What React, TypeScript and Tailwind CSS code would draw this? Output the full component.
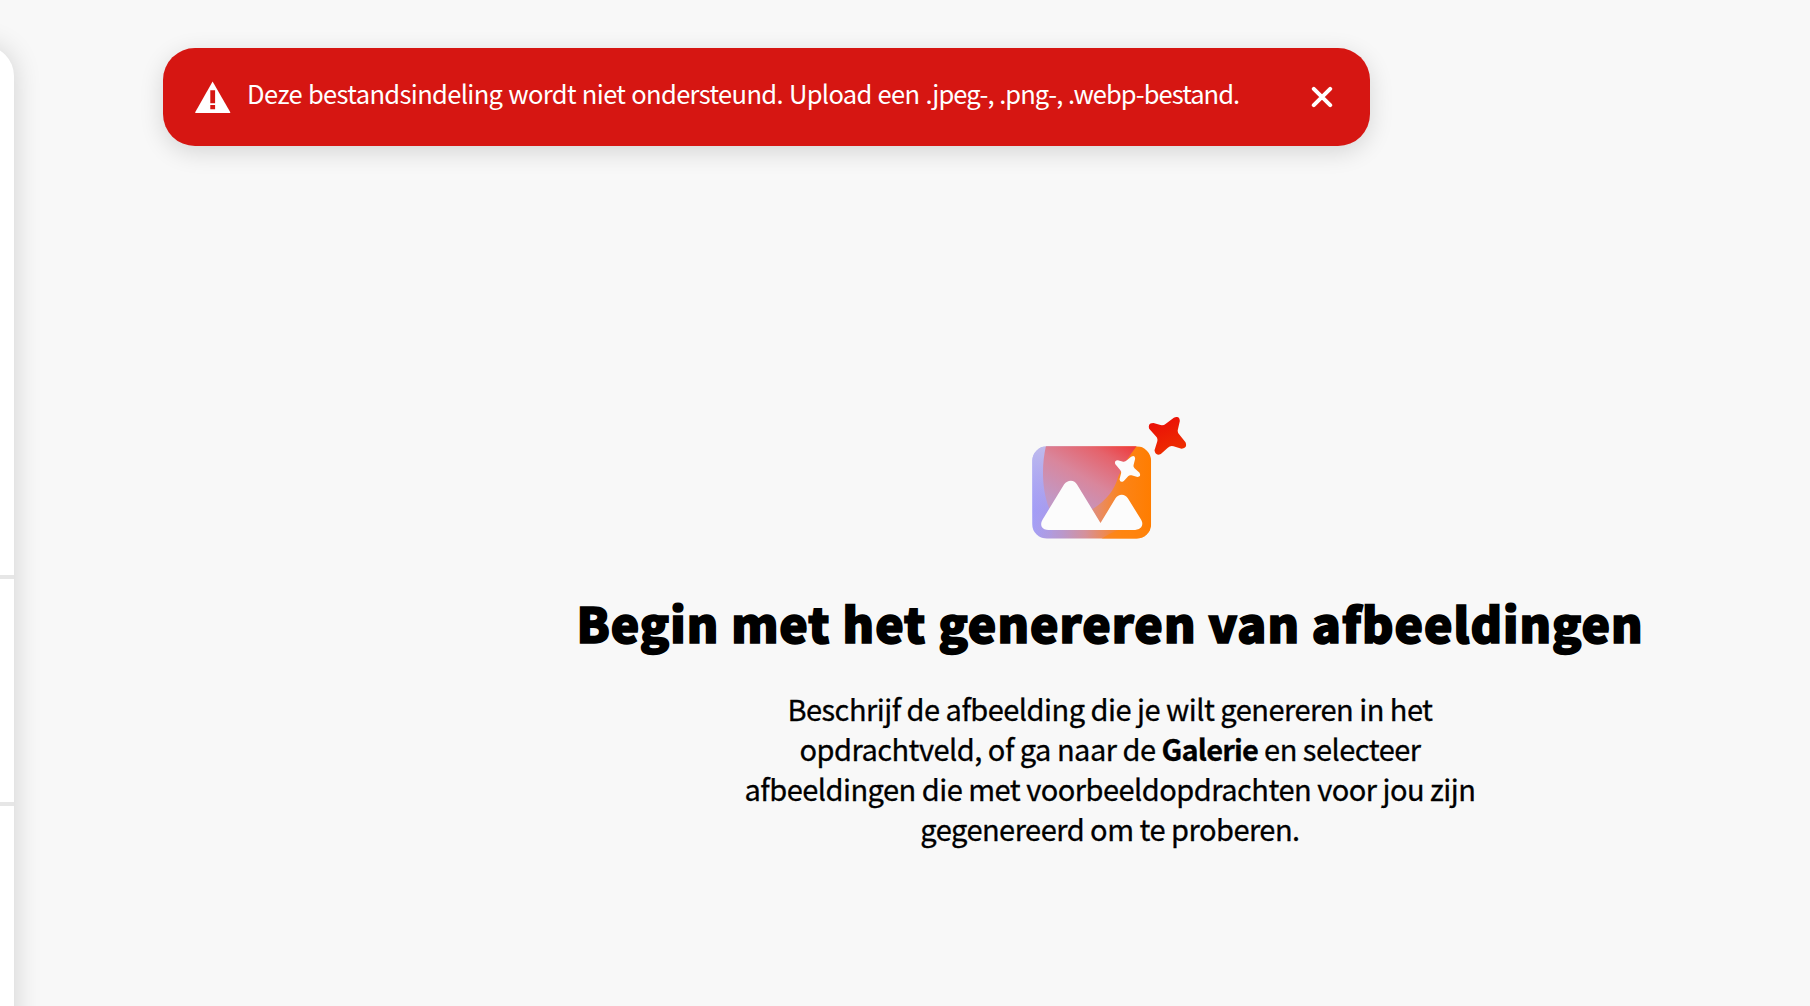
const DESCRIPTION = [
  'Beschrijf de afbeelding die je wilt genereren in het',
  'afbeeldingen die met voorbeeldopdrachten voor jou zijn',
  'gegenereerd om te proberen.',
];

const WarningIcon = () => (
  <svg viewBox="0 0 36 32" className="h-8 w-9 shrink-0" fill="none">
    <path d="M17.6 0.4 L35.3 31.2 Q35.5 32 34.8 32 H0.7 Q0 32 0.2 31.2 Z" fill="#fff" />
    <path d="M15.3 9.3h4.8v13h-4.8zM15.3 24h4.8v4.2h-4.8z" fill="#d61612" />
  </svg>
);

const CloseIcon = () => (
  <svg viewBox="0 0 22 22" className="h-[22px] w-[22px]" fill="none">
    <path d="M2.8 2.8 L19.2 19.2 M19.2 2.8 L2.8 19.2" stroke="#fff" strokeWidth="4" strokeLinecap="round" />
  </svg>
);

const Toast = () => (
  <div
    role="alert"
    className="flex h-[98px] w-[1207px] items-center rounded-[32px] bg-[#d61612] pr-[37px] pl-8 text-white shadow-[0_6px_24px_rgba(0,0,0,0.14)]"
  >
    <WarningIcon />
    <p className="-mt-2 ml-4 flex-1 text-[25.5px] leading-[34px] tracking-[-0.64px] whitespace-nowrap [word-spacing:0.85px]">
      Deze bestandsindeling wordt niet ondersteund. Upload een{' '}
      <span className="tracking-[-0.95px]">.jpeg-, .png-, .webp-bestand.</span>
    </p>
    <button aria-label="Sluiten">
      <CloseIcon />
    </button>
  </div>
);

const SidePanel = () => (
  <aside className="-ml-10 flex w-[54px] shrink-0 pt-[46px]">
    <div className="-mb-10 flex w-full flex-col rounded-tr-[30px] bg-white shadow-[0_0_28px_rgba(0,0,0,0.16)]">
      <div className="h-[529px]" />
      <div className="h-1 bg-[#e6e6e6]" />
      <div className="h-[223px]" />
      <div className="h-1 bg-[#e6e6e6]" />
    </div>
  </aside>
);

const ImageSparkle = () => (
  <svg viewBox="52 36 464 366" className="mr-0.5 h-[122px] w-[155px]">
    <defs>
      <linearGradient id="base" x1="0" y1="0" x2="1" y2="0">
        <stop offset="0" stopColor="#a5a0f5" />
        <stop offset="0.25" stopColor="#b998cc" />
        <stop offset="0.45" stopColor="#d5919a" />
        <stop offset="0.6" stopColor="#ec8a58" />
        <stop offset="0.75" stopColor="#fc8418" />
        <stop offset="1" stopColor="#ff7d00" />
      </linearGradient>
      <linearGradient id="blob" gradientUnits="userSpaceOnUse" x1="325" y1="105" x2="195" y2="330">
        <stop offset="0" stopColor="#ee3a3c" />
        <stop offset="0.25" stopColor="#e5636c" />
        <stop offset="0.6" stopColor="#d9869c" />
        <stop offset="1" stopColor="#c298c4" />
      </linearGradient>
      <linearGradient id="star" x1="0.2" y1="0" x2="0.6" y2="1">
        <stop offset="0" stopColor="#ea0c08" />
        <stop offset="1" stopColor="#ee2f00" />
      </linearGradient>
      <linearGradient id="shine" x1="0" y1="0" x2="0" y2="1">
        <stop offset="0" stopColor="#c4c2ec" stopOpacity="0.8" />
        <stop offset="0.7" stopColor="#a09bfa" stopOpacity="0.5" />
        <stop offset="1" stopColor="#a09bfa" stopOpacity="0" />
      </linearGradient>
      <clipPath id="frame">
        <rect x="52" y="124" width="357" height="277" rx="44" />
      </clipPath>
    </defs>
    <g clipPath="url(#frame)">
      <rect x="52" y="124" width="357" height="277" fill="url(#base)" />
      <rect x="52" y="124" width="60" height="277" fill="url(#shine)" />
      <path d="M94 120 C80 180 80 250 103 310 L120 340 L200 330 C265 300 298 260 310 215 C325 180 345 150 368 120 Z" fill="url(#blob)" />
      <path d="M260 401 Q285 384 312 374 H409 V401 Z" fill="#ff8610" opacity="0.7" />
    </g>
    <path
      d="M148 238 Q156 227 168 227 Q180 227 187 239 L257 354 L302 280 Q309 269 321 269 Q332 269 339 280 L379 344 Q386 357 379 367 Q373 375 361 375 H101 Q87 375 81 366 Q76 356 83 344 Z"
      fill="#fcfcfc"
    />
    <path
      d="M301 177 Q298 166 309 166 L325 170 Q331 171 336 166 L349 155 Q361 149 361 161 L356 181 Q355 186 359 190 L374 203 Q380 214 368 216 L350 211 Q344 209 340 214 L327 228 Q316 235 314 223 L319 204 Q320 199 316 195 Z"
      fill="#fcfcfc"
    />
    <path
      d="M403 71 Q398 54 416 54 L437 60 Q446 62 453 56 L477 38 Q494 31 495 48 L489 74 Q487 83 494 89 L512 112 Q519 129 500 131 L476 124 Q467 121 459 128 L438 147 Q422 154 419 136 L427 110 Q430 100 423 94 Z"
      fill="url(#star)"
    />
  </svg>
);

const EmptyState = () => (
  <section className="flex w-[1200px] flex-col items-center text-black">
    <ImageSparkle />
    <h1 className="mt-[50px] text-[48px] leading-[66px] font-black tracking-[0.95px] whitespace-nowrap [-webkit-text-stroke:1.6px_black]">
      Begin met het genereren van afbeeldingen
    </h1>
    <p className="mt-[33px] flex flex-col items-center text-[29px] leading-10 tracking-[-0.51px] whitespace-nowrap [-webkit-text-stroke:0.3px_black]">
      <span>{DESCRIPTION[0]}</span>
      <span>
        opdrachtveld, of ga naar de <strong className="font-bold tracking-[-0.8px]">Galerie</strong> en selecteer
      </span>
      {DESCRIPTION.slice(1).map(line => (
        <span key={line}>{line}</span>
      ))}
    </p>
  </section>
);

export default function App() {
  return (
    <div className="flex h-[1006px] w-[1810px] overflow-hidden bg-[#f8f8f8] font-['Noto_Sans_CJK_SC','Noto_Sans',sans-serif]">
      <SidePanel />
      <main className="flex flex-1 flex-col pt-12 pl-[149px]">
        <Toast />
        <div className="mt-[271px] pl-[347px]">
          <EmptyState />
        </div>
      </main>
    </div>
  );
}
